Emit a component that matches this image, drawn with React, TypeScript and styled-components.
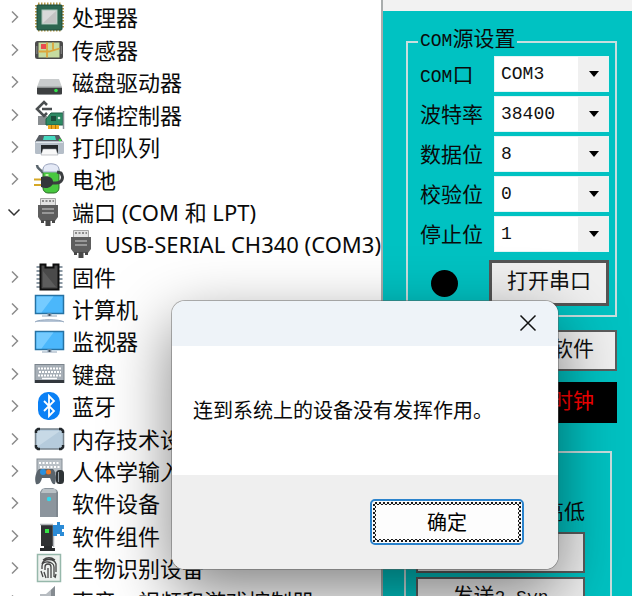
import React from "react";
import styled, { createGlobalStyle, css } from "styled-components";

const GlobalStyle = createGlobalStyle`
  * { box-sizing: border-box; }
  body { margin: 0; overflow: hidden; background: #fff; }
`;

const uiFont = `"Noto Sans", "Noto Sans CJK SC", sans-serif`;
const formFont = `"Liberation Mono", "Noto Sans CJK SC", monospace`;

const Desktop = styled.main`
  position: relative;
  display: flex;
  height: 100vh;
  overflow: hidden;
  color: #0a0a0a;
  font-family: ${uiFont};
`;

/* ---------- device tree ---------- */

const TreePane = styled.nav`
  flex: 1 1 0;
  min-width: 0;
  padding-top: 1px;
  overflow: hidden;
  background: #fff;
`;

const Tree = styled.ul`
  margin: 0;
  padding: 0;
  list-style: none;
`;

const TreeRow = styled.li<{ $child?: boolean }>`
  display: flex;
  align-items: center;
  height: 32px;
  padding-left: ${(p) => (p.$child ? 66 : 6)}px;
  font-size: 22px;
  line-height: 32px;
  white-space: nowrap;
  &:nth-child(5n + 2),
  &:nth-child(5n + 4) {
    height: 33px;
  }
`;

const Toggle = styled.button`
  display: flex;
  align-items: center;
  justify-content: center;
  width: 16px;
  height: 16px;
  margin-right: 10px;
  padding: 0;
  border: 0;
  background: none;
`;

const IconSlot = styled.span`
  display: flex;
  width: 34px;
  margin-right: 6px;
  justify-content: center;
`;

const Chevron = ({ open }: { open?: boolean }) => (
  <svg width="16" height="16" viewBox="0 0 16 16" fill="none" stroke={open ? "#333" : "#8c8c8c"} strokeWidth="1.5">
    <path d={open ? "M2.5 5.5 8 11l5.500-5.500" : "M6 2.500 11.500 8 6 13.500"} />
  </svg>
);

const Svg = ({ children }: { children: React.ReactNode }) => (
  <svg width="32" height="32" viewBox="0 0 32 32">
    {children}
  </svg>
);

const CpuIcon = () => (
  <Svg>
    <path d="M5 3H29M5 29H29M3.500 4V28M29.500 4V28" stroke="#b99a4a" strokeWidth="3" strokeDasharray="1.500 1.500" />
    <rect x="4" y="4" width="25" height="25" rx="1" fill="#2c6650" stroke="#1c4a3b" />
    <rect x="9" y="9" width="15" height="14" fill="#d9d9d9" stroke="#a9c4b8" />
    <path d="M10 22 23 10v12Z" fill="#c3c3c3" />
  </Svg>
);

const SensorIcon = () => (
  <Svg>
    <rect x="2" y="7" width="28" height="18" rx="2.500" fill="#4b4b4b" />
    <rect x="5.500" y="8.500" width="21" height="15" fill="#c6dca0" />
    <path d="M14 8.500v15M5.500 17.500H16l10.500-3M20 8.500v7" stroke="#dca63b" strokeWidth="1.800" fill="none" />
    <path d="M8 10h5v5H8z" fill="#ea4a4f" />
    <path d="M3.800 12v8M28.300 12v8" stroke="#8a8a8a" />
  </Svg>
);

const DiskIcon = () => (
  <Svg>
    <path d="M7 13h19l3 8H4Z" fill="#c9cccd" />
    <rect x="4" y="20.500" width="25" height="8" rx="1" fill="#3d4041" />
    <path d="M4 21h25" stroke="#dfe2e3" />
    <circle cx="23" cy="24.500" r="1.800" fill="#32e04b" />
    <path d="M6 28.500h21" stroke="#8b8e90" />
  </Svg>
);

const StorageIcon = () => (
  <Svg>
    <path d="M5 17h9l-1 9H5z" fill="#888d90" />
    <path d="m14 6-3-3-7 7 7 7 3-3M9 10h10" fill="none" stroke="#4a4e50" strokeWidth="2.600" />
    <path d="M18 14h12v12H13v-6Z" fill="#2d8a63" stroke="#1d5f46" />
    <path d="M18 17h5v5h-5z" fill="#1c4c3b" />
    <path d="M15 26h11v4H15z" fill="#f0a91e" />
    <path d="M18.500 26v4M22.500 26v4" stroke="#b87708" />
    <path d="M30.500 12v18" stroke="#8a9198" strokeWidth="1.500" />
    <circle cx="26" cy="19" r="1.300" fill="#d8efe5" />
  </Svg>
);

const PrinterIcon = () => (
  <Svg>
    <path d="M6 4h20l4 7H2Z" fill="#555b61" />
    <path d="M11 5h11l1 4H10z" fill="#46d9c0" />
    <rect x="2" y="10" width="29" height="13" rx="1.500" fill="#b5bec8" />
    <path d="M3 11.500h27" stroke="#e1e6eb" />
    <path d="M8 14h17v8H8z" fill="#25292c" />
    <path d="M10 18h13l2 6H8z" fill="#f8f8f8" stroke="#8c9298" strokeWidth="0.500" />
    <circle cx="27" cy="9" r="1.300" fill="#2fdf3d" />
  </Svg>
);

const BatteryIcon = () => (
  <Svg>
    <path d="M4 2c0 4 3 3 6 8" stroke="#59646c" strokeWidth="2.500" fill="none" />
    <rect x="10" y="3" width="16" height="27" rx="5" fill="#48c83f" stroke="#2a6f26" />
    <path d="M10 9V6c0-7 16-7 16 0v3Z" fill="#e4e9f6" stroke="#9aa3bd" />
    <path d="M14 11v8" stroke="#bff5a8" strokeWidth="3" />
    <path d="M19 20h4c6 0 8-5 5-10l-4-1" stroke="#3b3e40" strokeWidth="3" fill="none" />
    <path d="M8 14c8-2 12 1 12 5s-5 8-12 5Z" fill="#34383a" />
    <path d="M1 16.500h7M1 22h7" stroke="#d6a826" strokeWidth="2.200" />
  </Svg>
);

const PortIcon = () => (
  <Svg>
    <path d="M7.500 2.500h15v8h-15z" fill="#e3e3e3" stroke="#a6a6a6" />
    <path d="M9 5h12" stroke="#707070" strokeWidth="1.500" strokeDasharray="2 1.500" />
    <path d="M5 9h20v12l-3 4H8l-3-4Z" fill="#5e5e5e" />
    <path d="M9 13h12M9 17h12" stroke="#aaa" strokeWidth="1.300" />
    <path d="M8 24h3v3H8zM19 24h3v3h-3zM12.500 24h5v6h-5z" fill="#484848" />
  </Svg>
);

const ChipIcon = () => (
  <Svg>
    <path d="M6 5v24M27 5v24" stroke="#8d9aa5" strokeWidth="5" strokeDasharray="2 2" />
    <path d="M7.500 3.500h5v3h8v-3h5v25h-18z" fill="#4a4a4a" stroke="#0e0e0e" strokeWidth="2" />
    <path d="M10 26V10l13 16z" fill="#5d5d5d" />
  </Svg>
);

const screenShape = (y: number) => (
  <>
    <rect x="2.500" y={y + 0.5} width="28" height="18" fill="#4bb7fb" stroke="#2672a3" strokeWidth="1.500" />
    <path d={`M3.500 ${y + 1.5}h17l-12 16h-5z`} fill="#75cbff" />
    <path d={`M15 ${y + 19}h3v2h-3zM9 ${y + 21}h15`} stroke="#92a5b9" strokeWidth="1.200" />
  </>
);

const ComputerIcon = () => (
  <Svg>
    {screenShape(2)}
    <path d="M2 29c3-3 25-3 29 0" fill="#b8c7d8" stroke="#94a7bd" />
  </Svg>
);

const MonitorIcon = () => <Svg>{screenShape(6)}</Svg>;

const KeyboardIcon = () => (
  <Svg>
    <rect x="2" y="6.500" width="29" height="18" fill="#a7afb7" stroke="#7c858d" />
    <path d="M5 10.500h23M6 14h22M5 17.500h23" stroke="#fff" strokeWidth="2" strokeDasharray="2 1" />
    <path d="M9 20.500h15" stroke="#fff" strokeWidth="1.500" />
    <path d="M2 22h29v3H2z" fill="#33383d" />
  </Svg>
);

const BluetoothIcon = () => (
  <Svg>
    <rect x="5" y="2" width="22" height="28" rx="10" fill="#0a80f5" />
    <path d="m11 11 10 10-5 5V6l5 5-10 10" fill="none" stroke="#fff" strokeWidth="1.800" />
  </Svg>
);

const MemoryIcon = () => (
  <Svg>
    <rect x="2.500" y="6" width="28" height="20" rx="2.500" fill="#b5cbdc" stroke="#76828c" strokeWidth="1.500" />
    <path d="M4 24 27 8H4z" fill="#c7d9e6" />
    <path d="M3 10V8l2-2h2M26 6h2l2 2v2M3 22v2l2 2h2M26 26h2l2-2v-2" fill="none" stroke="#22272b" strokeWidth="2.400" />
  </Svg>
);

const HidIcon = () => (
  <Svg>
    <rect x="4" y="4" width="25" height="14" fill="#b9c0c6" stroke="#858e96" />
    <path d="M6 8h21M7 12h20" stroke="#fff" strokeWidth="2" strokeDasharray="2 1.500" />
    <path d="M6 14h14c3 3 4 9 2 15-3 1-4-4-5-6H9c-1 4-3 7-6 6-2-6 0-12 3-15Z" fill="#5a646c" />
    <circle cx="10" cy="17" r="3" fill="#2b91df" />
    <circle cx="15.500" cy="17" r="2.500" fill="#f07a28" />
    <rect x="23" y="15" width="8" height="14" rx="3.500" fill="#2e3336" />
    <path d="M25.500 17v10" stroke="#97a1a8" />
  </Svg>
);

const DeviceIcon = () => (
  <Svg>
    <path d="m9 2 3-1h8l4 2 1 2v25H7V5Z" fill="#8c959d" />
    <path d="M10 2h12l2 4H8z" fill="#b9c0c5" />
    <path d="M24 5v25" stroke="#707980" />
    <circle cx="16" cy="12" r="2.200" fill="#35d8ec" />
  </Svg>
);

const ComponentIcon = () => (
  <Svg>
    <path d="M8 5h13v21H8z" fill="#303234" />
    <path d="M7 4.500h13M20.500 5v22" stroke="#b4b8bc" strokeWidth="1.500" />
    <path d="M12 9h4v4h-4z" fill="#36e447" />
    <path d="M11 26h8v3h-8zM7 28h15v3H7z" fill="#2a2c2e" />
    <path d="M20 5h4V2h3v3h4v4h-2v3h2v4h-4v-2h-3v2h-4z" fill="#2b8bd6" />
  </Svg>
);

const FingerprintIcon = () => (
  <Svg>
    <rect x="4.500" y="2.500" width="23" height="27" fill="#edf1ee" stroke="#96b8ab" strokeWidth="1.500" />
    <g fill="none" stroke="#444" strokeWidth="1.300">
      <path d="M10 8c4-3 8-3 12 0M9 12c2-6 12-6 14 0v8M9 17v-3c0-6 12-5 12 1v10M12 18v-3c0-4 6-4 6 0v11M15 16v10M8 19l2 6M11 20l2 6M23 22l-1 4" />
    </g>
  </Svg>
);

const SpeakerIcon = () => (
  <Svg>
    <path d="M7 9h6l9-8v28l-9-8H7z" fill="#b7bcc1" />
    <path d="M18 5v20l4 4V1z" fill="#858b91" />
  </Svg>
);

type Device = { label: string; Icon: () => React.JSX.Element; open?: boolean; child?: boolean };

const devices: Device[] = [
  { label: "处理器", Icon: CpuIcon },
  { label: "传感器", Icon: SensorIcon },
  { label: "磁盘驱动器", Icon: DiskIcon },
  { label: "存储控制器", Icon: StorageIcon },
  { label: "打印队列", Icon: PrinterIcon },
  { label: "电池", Icon: BatteryIcon },
  { label: "端口 (COM 和 LPT)", Icon: PortIcon, open: true },
  { label: "USB-SERIAL CH340 (COM3)", Icon: PortIcon, child: true },
  { label: "固件", Icon: ChipIcon },
  { label: "计算机", Icon: ComputerIcon },
  { label: "监视器", Icon: MonitorIcon },
  { label: "键盘", Icon: KeyboardIcon },
  { label: "蓝牙", Icon: BluetoothIcon },
  { label: "内存技术设备", Icon: MemoryIcon },
  { label: "人体学输入设备", Icon: HidIcon },
  { label: "软件设备", Icon: DeviceIcon },
  { label: "软件组件", Icon: ComponentIcon },
  { label: "生物识别设备", Icon: FingerprintIcon },
  { label: "声音、视频和游戏控制器", Icon: SpeakerIcon },
];

/* ---------- serial tool window ---------- */

const ToolWindow = styled.section`
  flex: 0 0 251px;
  display: flex;
  flex-direction: column;
  border-left: 2px solid #a9adad;
  background: #00c2c2;
  font-family: ${formFont};
`;

const ToolTitle = styled.div`
  flex: 0 0 11px;
  background: #f2f2f2;
`;

const ToolBody = styled.div`
  display: flex;
  flex-direction: column;
  padding: 17px 15px 0 23px;
`;

const groupFrame = css`
  min-width: 0;
  margin: 0;
  border: 2px solid #c8dede;
`;

const SettingsGroup = styled.fieldset`
  ${groupFrame}
  padding: 0 6px 9px 12px;
`;

const Legend = styled.legend`
  height: 28px;
  margin-left: -2px;
  padding: 0 2px;
  font-size: 21px;
  line-height: 26px;
`;

const Latin = styled.span`
  font-size: 18px;
`;

const Fields = styled.div`
  display: grid;
  grid-template-columns: 74px 1fr;
  row-gap: 4px;
`;

const FieldLabel = styled.label`
  height: 36px;
  font-size: 21px;
  line-height: 42px;
`;

const Picker = styled.div`
  display: grid;
  height: 36px;
  background: #fff;
`;

const Select = styled.select`
  grid-area: 1 / 1;
  width: 100%;
  padding: 0 0 0 6px;
  border: 1px solid #e4f4f4;
  border-radius: 0;
  appearance: none;
  background: linear-gradient(#f0f0f0, #f0f0f0) right / 30px 100% no-repeat #fff;
  color: #111;
  font-family: ${formFont};
  font-size: 18px;
`;

const Arrow = styled.svg`
  grid-area: 1 / 1;
  align-self: center;
  justify-self: end;
  margin-right: 10px;
  pointer-events: none;
`;

const PortActions = styled.div`
  display: flex;
  align-items: center;
  justify-content: space-between;
  margin-top: 8px;
  padding-left: 11px;
`;

const Lamp = styled.span`
  width: 27px;
  height: 27px;
  border-radius: 50%;
  background: #000;
`;

const FormButton = styled.button<{ $tone?: "focus" | "dark"; $end?: boolean }>`
  height: 41px;
  padding: 0 21px;
  border: 2px solid #5c5c5c;
  background: #f0f0f0;
  color: #111;
  font-family: ${formFont};
  font-size: 21px;
  line-height: 32px;
  text-align: ${(p) => (p.$end ? "right" : "center")};
  white-space: nowrap;
  ${(p) =>
    p.$tone === "focus" &&
    css`
      width: 120px;
      height: 46px;
      padding: 0;
      border: 3px solid #555;
    `}
  ${(p) =>
    p.$tone === "dark" &&
    css`
      border-color: #000;
      background: #000;
      color: #f00;
    `}
`;

const SideActions = styled.div`
  display: grid;
  gap: 11px;
  margin-top: 13px;
`;

const SendGroup = styled.fieldset`
  ${groupFrame}
  display: grid;
  gap: 4px;
  margin: 28px 5px 0 -2px;
  padding: 44px 25px 0 10px;
`;

const LevelLabel = styled.span`
  height: 31px;
  font-size: 21px;
  line-height: 34px;
  text-align: right;
`;

const fields = [
  { id: "port", label: "口", latin: "COM", options: ["COM3"] },
  { id: "baud", label: "波特率", options: ["38400", "9600", "115200"] },
  { id: "data", label: "数据位", options: ["8", "7"] },
  { id: "parity", label: "校验位", options: ["0", "1", "2"] },
  { id: "stop", label: "停止位", options: ["1", "2"] },
];

/* ---------- message box ---------- */

const Dialog = styled.div`
  position: absolute;
  top: 301px;
  left: 172px;
  width: 386px;
  overflow: hidden;
  border-radius: 13px;
  background: #fff;
  box-shadow: 0 0 0 1px rgba(90, 90, 90, 0.45), 0 22px 64px rgba(0, 0, 0, 0.5);
`;

const DialogTitle = styled.header`
  display: flex;
  justify-content: flex-end;
  height: 45px;
  padding: 10px 18px;
  background: #eef3f8;
`;

const CloseButton = styled.button`
  display: flex;
  padding: 0;
  border: 0;
  background: none;
`;

const Message = styled.p`
  margin: 0;
  padding: 48px 21px 49px;
  font-family: "Noto Sans CJK SC", sans-serif;
  font-size: 20px;
  line-height: 32px;
  white-space: nowrap;
`;

const DialogFooter = styled.footer`
  display: flex;
  justify-content: flex-end;
  padding: 24px 34px;
  background: #efefef;
`;

const OkButton = styled.button`
  width: 154px;
  height: 46px;
  padding: 1px;
  border: 2px solid #2b83cc;
  border-radius: 5px;
  background: #fdfdfd;
`;

const FocusRing = styled.span`
  display: block;
  border: 3px solid transparent;
  background:
    linear-gradient(#fdfdfd, #fdfdfd) padding-box,
    repeating-conic-gradient(#1a1a1a 0 25%, #f4f4f4 0 50%) 0 0 / 4px 4px border-box;
  font-family: "Noto Sans CJK SC", sans-serif;
  font-size: 20px;
  line-height: 34px;
`;

export default function App() {
  return (
    <>
      <GlobalStyle />
      <Desktop>
        <TreePane aria-label="设备">
          <Tree>
            {devices.map(({ label, Icon, open, child }) => (
              <TreeRow key={label} $child={child}>
                {!child && (
                  <Toggle aria-label={label} aria-expanded={!!open}>
                    <Chevron open={open} />
                  </Toggle>
                )}
                <IconSlot>
                  <Icon />
                </IconSlot>
                {label}
              </TreeRow>
            ))}
          </Tree>
        </TreePane>

        <ToolWindow>
          <ToolTitle />
          <ToolBody>
            <SettingsGroup>
              <Legend>
                <Latin>COM</Latin>源设置
              </Legend>
              <Fields>
                {fields.map((f) => (
                  <React.Fragment key={f.id}>
                    <FieldLabel htmlFor={f.id}>
                      {f.latin && <Latin>{f.latin}</Latin>}
                      {f.label}
                    </FieldLabel>
                    <Picker>
                      <Select id={f.id}>
                        {f.options.map((o) => (
                          <option key={o}>{o}</option>
                        ))}
                      </Select>
                      <Arrow width="10" height="6" viewBox="0 0 10 6">
                        <path d="M0 0h10L5 6z" fill="#000" />
                      </Arrow>
                    </Picker>
                  </React.Fragment>
                ))}
              </Fields>
              <PortActions>
                <Lamp />
                <FormButton $tone="focus">打开串口</FormButton>
              </PortActions>
            </SettingsGroup>
            <SideActions>
              <FormButton $end>软件</FormButton>
              <FormButton $end $tone="dark">
                时钟
              </FormButton>
            </SideActions>
            <SendGroup>
              <LevelLabel>高低</LevelLabel>
              <FormButton aria-label="发送" />
              <FormButton>
                发送<Latin>2 Syn</Latin>
              </FormButton>
            </SendGroup>
          </ToolBody>
        </ToolWindow>

        <Dialog role="alertdialog" aria-describedby="message">
          <DialogTitle>
            <CloseButton aria-label="关闭">
              <svg width="24" height="24" viewBox="0 0 24 24" stroke="#111" strokeWidth="1.500">
                <path d="m4.500 4.500 15 15m0-15-15 15" />
              </svg>
            </CloseButton>
          </DialogTitle>
          <Message id="message">连到系统上的设备没有发挥作用。</Message>
          <DialogFooter>
            <OkButton>
              <FocusRing>确定</FocusRing>
            </OkButton>
          </DialogFooter>
        </Dialog>
      </Desktop>
    </>
  );
}
